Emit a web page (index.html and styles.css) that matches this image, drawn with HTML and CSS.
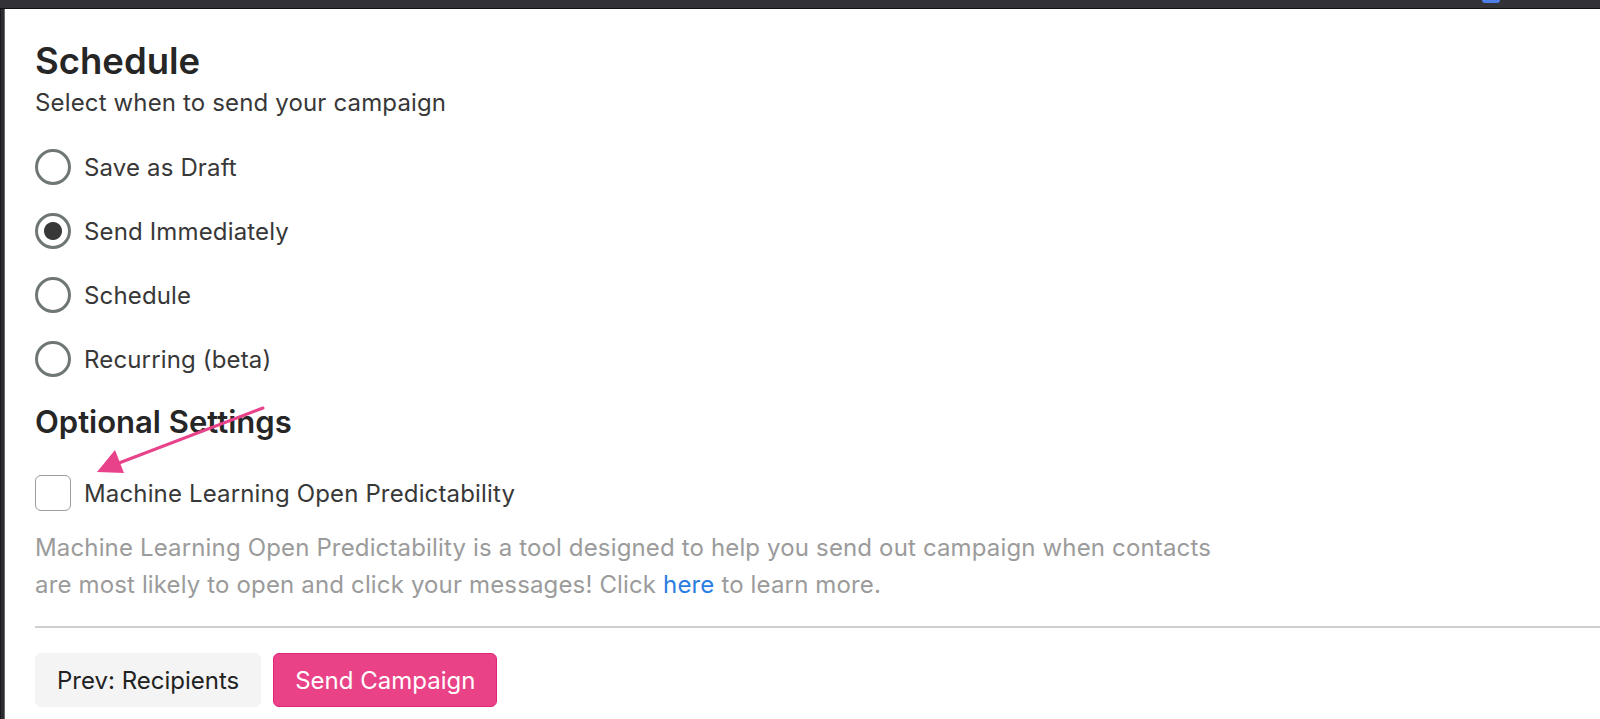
FILE: index.html
```html
<!DOCTYPE html>
<html lang="en">
<head>
<meta charset="utf-8">
<title>Schedule</title>
<link rel="stylesheet" href="styles.css">
</head>
<body>
<div class="topbar"><span class="topbar-pill"></span></div>
<div class="frame">
  <main class="panel">
    <h1 class="title">Schedule</h1>
    <p class="subtitle">Select when to send your campaign</p>

    <div class="options">
      <label class="option"><span class="radio"></span><span>Save as Draft</span></label>
      <label class="option"><span class="radio checked"></span><span>Send Immediately</span></label>
      <label class="option"><span class="radio"></span><span>Schedule</span></label>
      <label class="option"><span class="radio"></span><span>Recurring (beta)</span></label>
    </div>

    <h2 class="section-title">Optional Settings</h2>

    <label class="check-row"><span class="checkbox"></span><span>Machine Learning Open Predictability</span></label>

    <p class="desc">Machine Learning Open Predictability is a tool designed to help you send out campaign when contacts are most likely to open and click your messages! Click <a href="#" class="link">here</a> to learn more.</p>

    <hr class="divider">

    <div class="actions">
      <button class="btn btn-secondary">Prev: Recipients</button>
      <button class="btn btn-primary">Send Campaign</button>
    </div>

    <svg class="annotation" width="200" height="90" viewBox="0 0 200 90">
      <line x1="194" y1="6" x2="50" y2="61" stroke="#e8428a" stroke-width="3" stroke-linecap="round"/>
      <polygon points="28,70 46,48 55,71" fill="#e8428a"/>
    </svg>
  </main>
</div>
</body>
</html>
```

FILE: styles.css
```css
* { box-sizing: border-box; }

html, body {
  margin: 0;
  padding: 0;
  height: 100%;
}

body {
  background: #2c2c30;
  font-family: Inter, "Noto Sans", sans-serif;
  color: #333333;
  overflow: hidden;
  display: flex;
  flex-direction: column;
}

.topbar {
  height: 9px;
  background: #333337;
  border-bottom: 1px solid #111113;
  display: flex;
  justify-content: flex-end;
  padding-right: 100px;
  flex-shrink: 0;
}

.topbar-pill {
  width: 18px;
  height: 3px;
  background: #4d7fe6;
  border-radius: 0 0 3px 3px;
}

.frame {
  flex: 1;
  padding-left: 3px;
  border-left: 1px solid #1b1b1d;
  display: flex;
}

.panel {
  position: relative;
  flex: 1;
  background: #ffffff;
  border-left: 1px solid #6a6a6e;
  padding: 30px 0 0 30px;
}

.title {
  margin: 0;
  font-size: 36.5px;
  line-height: 44px;
  font-weight: 600;
  color: #262626;
}

.subtitle {
  margin: 5px 0 0;
  font-size: 24px;
  line-height: 30px;
  letter-spacing: 0.15px;
  color: #383838;
}

.options {
  margin-top: 17px;
  display: flex;
  flex-direction: column;
}

.option {
  height: 64px;
  display: flex;
  align-items: center;
  gap: 13px;
  font-size: 24px;
  letter-spacing: 0.15px;
  color: #383838;
}

.radio {
  width: 36px;
  height: 36px;
  border-radius: 50%;
  border: 3px solid #6f7774;
  flex-shrink: 0;
}

.radio.checked {
  background: radial-gradient(circle, #383838 0, #383838 8.5px, transparent 9.5px);
}

.section-title {
  margin: 13px 0 0;
  font-size: 31px;
  line-height: 36px;
  font-weight: 600;
  color: #262626;
}

.check-row {
  margin-top: 35px;
  height: 36px;
  display: flex;
  align-items: center;
  gap: 13px;
  font-size: 24px;
  letter-spacing: 0.15px;
  color: #383838;
}

.checkbox {
  width: 36px;
  height: 36px;
  border: 1.5px solid #9c9c9c;
  border-radius: 6px;
  flex-shrink: 0;
}

.desc {
  margin: 18px 0 0;
  max-width: 1200px;
  font-size: 24px;
  line-height: 37px;
  letter-spacing: 0.15px;
  color: #9b9b9b;
}

.link {
  color: #2a7de1;
  text-decoration: none;
}

.divider {
  margin: 23px 0 0;
  border: 0;
  height: 2px;
  background: #cfcfcf;
}

.actions {
  margin-top: 25px;
  display: flex;
  gap: 12px;
}

.btn {
  height: 54px;
  padding: 0 21px;
  font-family: inherit;
  font-size: 24px;
  border-radius: 6px;
  cursor: pointer;
}

.btn-secondary {
  background: #f4f4f4;
  border: 1px solid #f4f4f4;
  color: #222222;
}

.btn-primary {
  background: #e94287;
  border: 1px solid #e2237a;
  color: #ffffff;
}

.annotation {
  position: absolute;
  left: 64px;
  top: 393px;
  overflow: visible;
}
```
